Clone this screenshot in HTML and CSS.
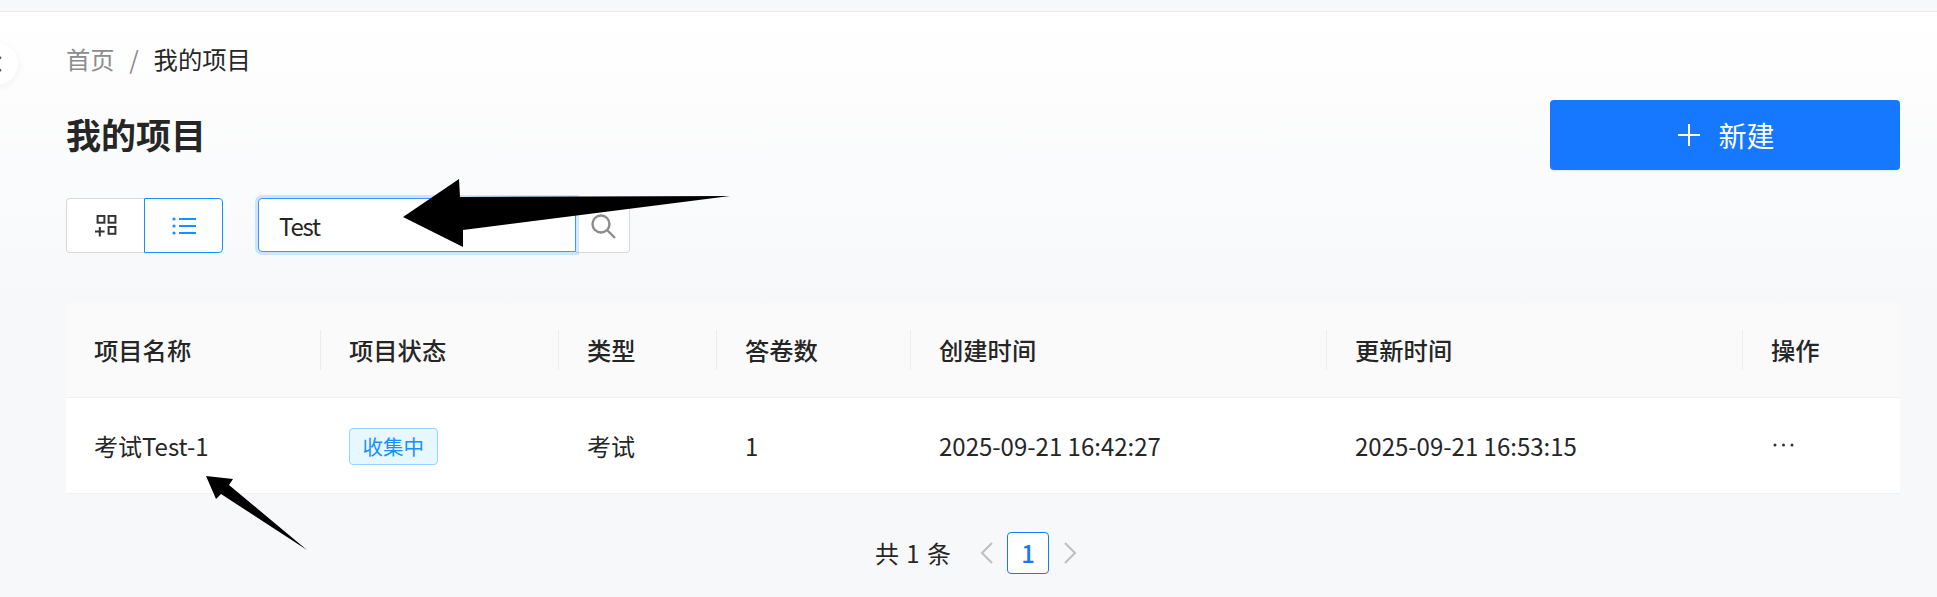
FILE: index.html
```html
<!DOCTYPE html>
<html lang="zh-CN">
<head>
  <meta charset="UTF-8">
  <meta name="viewport" content="width=device-width, initial-scale=1.0">
  <title>我的项目</title>
  <link rel="stylesheet" href="styles.css">
</head>
<body>
  <div class="topbar"></div>

  <button class="side-toggle" type="button" aria-label="收起">
    <svg width="12" height="18" viewBox="0 0 12 18"><path d="M9 2 2 9l7 7" fill="none" stroke="#555" stroke-width="2"/></svg>
  </button>

  <main class="content">
    <nav class="breadcrumb">
      <span class="crumb-link">首页</span>
      <span class="crumb-sep">/</span>
      <span>我的项目</span>
    </nav>

    <div class="title-row">
      <h1>我的项目</h1>
      <button class="btn-new" type="button">
        <svg width="22" height="22" viewBox="0 0 22 22"><path d="M11 0v22M0 11h22" stroke="#fff" stroke-width="2"/></svg>
        <span>新建</span>
      </button>
    </div>

    <div class="toolbar">
      <div class="view-switch">
        <button class="view-btn" type="button" aria-label="卡片">
          <svg width="22" height="22" viewBox="0 0 22 22" fill="none" stroke="#333" stroke-width="2">
            <rect x="2.6" y="0.9" width="6.8" height="6.8"/>
            <rect x="13.6" y="0.9" width="6.8" height="6.8"/>
            <rect x="13.6" y="12" width="6.8" height="6.8"/>
            <path d="M0 16.5h9.6M4.8 12v9.4"/>
          </svg>
        </button>
        <button class="view-btn active" type="button" aria-label="列表">
          <svg width="24" height="18" viewBox="0 0 24 18" fill="#1890ff">
            <circle cx="2" cy="2" r="1.6"/>
            <circle cx="2" cy="9" r="1.6"/>
            <circle cx="2" cy="16" r="1.6"/>
            <rect x="7" y="1" width="17" height="2"/>
            <rect x="7" y="8" width="17" height="2"/>
            <rect x="7" y="15" width="17" height="2"/>
          </svg>
        </button>
      </div>

      <div class="search">
        <input class="search-input" type="text" value="Test">
        <button class="search-btn" type="button" aria-label="搜索">
          <svg width="26" height="26" viewBox="0 0 26 26" fill="none" stroke="#8c8c8c" stroke-width="2.4">
            <circle cx="11" cy="11" r="8.5"/>
            <path d="m17 17 8 8"/>
          </svg>
        </button>
      </div>
    </div>

    <table class="project-table">
      <colgroup>
        <col class="col-name">
        <col class="col-status">
        <col class="col-type">
        <col class="col-count">
        <col class="col-time">
        <col class="col-time">
        <col>
      </colgroup>
      <thead>
        <tr>
          <th>项目名称</th><th>项目状态</th><th>类型</th><th>答卷数</th><th>创建时间</th><th>更新时间</th><th>操作</th>
        </tr>
      </thead>
      <tbody>
        <tr>
          <td>考试Test-1</td>
          <td><span class="tag">收集中</span></td>
          <td>考试</td>
          <td>1</td>
          <td>2025-09-21 16:42:27</td>
          <td>2025-09-21 16:53:15</td>
          <td>
            <svg class="more" width="21" height="4" viewBox="0 0 21 4" fill="#333">
              <circle cx="2" cy="2" r="1.5"/>
              <circle cx="10.5" cy="2" r="1.5"/>
              <circle cx="19" cy="2" r="1.5"/>
            </svg>
          </td>
        </tr>
      </tbody>
    </table>

    <div class="pagination">
      <span class="total">共 1 条</span>
      <span class="page-arrow">
        <svg width="13" height="22" viewBox="0 0 13 22"><path d="M12 1 2 11l10 10" fill="none" stroke="#bfbfbf" stroke-width="2"/></svg>
      </span>
      <span class="page-item">1</span>
      <span class="page-arrow">
        <svg width="13" height="22" viewBox="0 0 13 22"><path d="m1 1 10 10L1 21" fill="none" stroke="#bfbfbf" stroke-width="2"/></svg>
      </span>
    </div>
  </main>

  <!-- hand drawn annotation arrows on top of the screenshot -->
  <svg class="arrows" width="1937" height="597" viewBox="0 0 1937 597">
    <polygon points="403,217 459,179 460,197 730,196 463,230 463,247"/>
    <polygon points="206,476 233,479 229,485 307,550 221,494 216,499"/>
  </svg>
</body>
</html>
```

FILE: styles.css
```css
* {
  box-sizing: border-box;
}
html, body {
  height: 597px;
  overflow: hidden;
}
body {
  margin: 0;
  font-family: "Noto Sans CJK SC", "Noto Sans", sans-serif;
  font-size: 24px;
  color: #262626;
  background: linear-gradient(180deg, #fff 12px, #f7f8fa 300px);
}
button {
  font-family: inherit;
  padding: 0;
  cursor: pointer;
}
.topbar {
  height: 12px;
  background: #f7f8fa;
  border-bottom: 1px solid #e8e8e8;
}
.side-toggle {
  position: absolute;
  left: -24px;
  top: 43px;
  width: 42px;
  height: 42px;
  display: flex;
  align-items: center;
  justify-content: flex-end;
  padding-right: 14px;
  border: 0;
  border-radius: 50%;
  background: #fff;
  box-shadow: 0 2px 8px rgba(0,0,0,0.05);
}
.content {
  padding: 0 37px 0 66px;
}
.breadcrumb {
  display: flex;
  align-items: center;
  height: 34px;
  margin-top: 30px;
  line-height: 34px;
  font-size: 24.3px;
}
.crumb-link {
  color: #8c8c8c;
}
.crumb-sep {
  width: 39px;
  text-align: center;
  color: #8c8c8c;
}
.title-row {
  display: flex;
  justify-content: space-between;
  align-items: center;
  height: 70px;
  margin-top: 24px;
}
h1 {
  margin: 0 0 2px;
  font-size: 35px;
  font-weight: 700;
  line-height: 46px;
}
.btn-new {
  display: flex;
  align-items: center;
  justify-content: center;
  gap: 18px;
  width: 350px;
  height: 70px;
  padding-left: 3px;
  border: 0;
  border-radius: 4px;
  background: #1677ff;
  color: #fff;
  font-size: 28px;
  box-shadow: 0 2px 0 rgba(5,95,255,0.06);
}
.toolbar {
  display: flex;
  align-items: flex-start;
  gap: 35px;
  margin-top: 28px;
}
.view-switch {
  display: flex;
  height: 55px;
}
.view-btn {
  display: flex;
  align-items: center;
  justify-content: center;
  width: 78px;
  background: #fff;
  border: 1px solid #d9d9d9;
  border-right: 0;
  border-radius: 4px 0 0 4px;
}
.view-btn.active {
  width: 79px;
  border: 1px solid #1890ff;
  border-radius: 0 4px 4px 0;
}
.search {
  display: flex;
  height: 55px;
}
.search-input {
  width: 318px;
  height: 54px;
  padding: 0 20px;
  font-family: inherit;
  font-size: 24px;
  letter-spacing: -1.2px;
  color: #262626;
  background: #fff;
  border: 1px solid #4096ff;
  border-radius: 4px 0 0 4px;
  outline: 0;
  box-shadow: 0 0 0 3px rgba(24,144,255,0.2);
  position: relative;
}
.search-btn {
  display: flex;
  align-items: center;
  justify-content: center;
  width: 54px;
  background: #fff;
  border: 1px solid #d9d9d9;
  border-left: 0;
  border-radius: 0 4px 4px 0;
}
.project-table {
  width: 100%;
  margin-top: 50px;
  border-collapse: collapse;
  table-layout: fixed;
  background: #fff;
}
.col-name { width: 255px; }
.col-status { width: 238px; }
.col-type { width: 158px; }
.col-count { width: 194px; }
.col-time { width: 416px; }
.project-table th {
  position: relative;
  height: 94px;
  padding: 0 28px;
  text-align: left;
  font-size: 24.3px;
  font-weight: 500;
  background: #fafafa;
  border-bottom: 1px solid #f0f0f0;
}
.project-table th + th::before {
  content: "";
  position: absolute;
  left: -1px;
  top: 27px;
  width: 1px;
  height: 40px;
  background: #ececec;
}
.project-table td {
  height: 96px;
  padding: 0 28px;
  border-bottom: 1px solid #f0f0f0;
}
.tag {
  display: inline-block;
  height: 37px;
  padding: 0 12.5px;
  font-size: 20.5px;
  line-height: 35px;
  color: #1890ff;
  background: #e6f7ff;
  border: 1px solid #91d5ff;
  border-radius: 4px;
  vertical-align: middle;
}
.more {
  display: block;
  margin-left: 2px;
}
.pagination {
  display: flex;
  justify-content: center;
  align-items: center;
  margin-top: 37px;
  height: 44px;
}
.total {
  margin-right: 14px;
  word-spacing: 2px;
}
.page-arrow {
  display: flex;
  align-items: center;
  justify-content: center;
  width: 42px;
  height: 42px;
}
.page-item {
  width: 42px;
  height: 42px;
  text-align: center;
  font-weight: 500;
  line-height: 40px;
  color: #1677ff;
  background: #fff;
  border: 1px solid #1677ff;
  border-radius: 4px;
}
.arrows {
  position: absolute;
  left: 0;
  top: 0;
  pointer-events: none;
}
```
